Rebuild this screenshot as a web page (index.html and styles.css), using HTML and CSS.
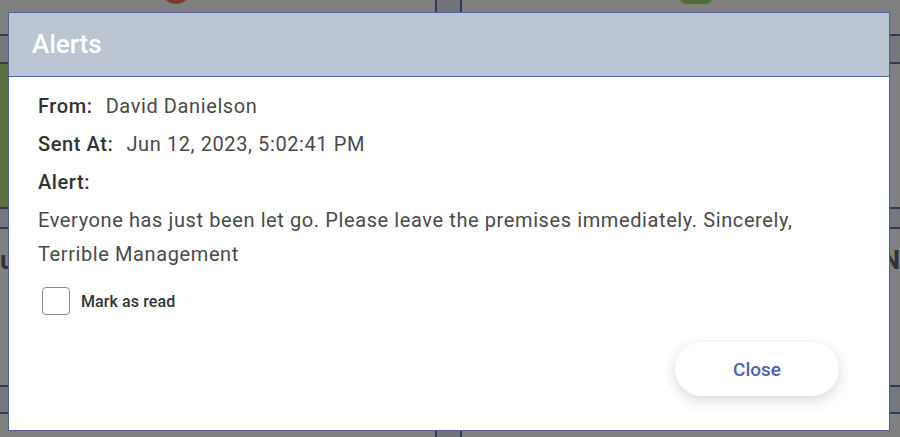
FILE: index.html
```html
<!DOCTYPE html>
<html lang="en">
<head>
<meta charset="utf-8">
<title>Alerts</title>
<link rel="stylesheet" href="styles.css">
</head>
<body>
<div class="app">
  <div class="col col-left">
    <div class="dot red"></div>
    <div class="band band-top"></div>
    <div class="green"></div>
    <div class="band band-mid"></div>
    <div class="bg-letter">u</div>
    <div class="spacer"></div>
    <div class="band band-bottom"></div>
  </div>
  <div class="divider"></div>
  <div class="col col-right">
    <div class="dot green-dot"></div>
    <div class="band band-top"></div>
    <div class="blank"></div>
    <div class="band band-mid"></div>
    <div class="bg-letter">N</div>
    <div class="spacer"></div>
    <div class="band band-bottom"></div>
  </div>
</div>

<div class="modal">
  <div class="modal-header">Alerts</div>
  <div class="modal-body">
    <div class="row"><span class="label">From:</span><span class="value">David Danielson</span></div>
    <div class="row"><span class="label">Sent At:</span><span class="value">Jun 12, 2023, 5:02:41 PM</span></div>
    <div class="row"><span class="label">Alert:</span></div>
    <p class="message">Everyone has just been let go. Please leave the premises immediately. Sincerely, Terrible Management</p>
    <label class="check"><span class="box"></span><span class="check-text">Mark as read</span></label>
    <div class="actions"><button class="close-btn">Close</button></div>
  </div>
</div>
</body>
</html>
```
FILE: styles.css
```css
* { box-sizing: border-box; }
html, body { margin: 0; padding: 0; }
body {
  width: 900px;
  height: 437px;
  overflow: hidden;
  background: #808080;
  font-family: Roboto, "Liberation Sans", sans-serif;
  position: relative;
}
.app {
  display: flex;
  height: 437px;
}
.col {
  display: flex;
  flex-direction: column;
  position: relative;
}
.col-left { width: 438px; }
.col-right { flex: 1; }
.divider {
  width: 27px;
  background: #727478;
  border-left: 2px solid #2f3a55;
  border-right: 2px solid #2f3a55;
}
.dot { position: absolute; top: -10px; height: 14px; }
.red { left: 165px; width: 22px; border-radius: 50%; background: #7a3a32; }
.green-dot { left: 218px; width: 32px; border-radius: 6px; background: #4f6c3a; }
.band {
  height: 30px;
  background: #75777b;
  border-top: 2px solid #2f3a55;
  border-bottom: 2px solid #2f3a55;
  flex: none;
}
.band-top { margin-top: 34px; }
.green { height: 143px; background: #5e6e3f; flex: none; }
.blank { height: 143px; flex: none; }
.band-mid { height: 22px; }
.bg-letter {
  font-size: 26px;
  font-weight: 700;
  color: #333;
  line-height: 30px;
  margin-top: 16px;
}
.col-left .bg-letter { margin-left: 0; }
.col-right .bg-letter { margin-left: 420px; }
.spacer { flex: 1; }
.band-bottom { margin-bottom: 23px; height: 29px; }

.modal {
  position: absolute;
  left: 8px;
  top: 12px;
  width: 882px;
  height: 419px;
  background: #fff;
  border: 1px solid #4e6496;
  display: flex;
  flex-direction: column;
}
.modal-header {
  height: 64px;
  background: #bcc6d2;
  border-bottom: 1px solid #4e6496;
  color: #fff;
  font-size: 26px;
  font-weight: 500;
  padding-left: 23px;
  line-height: 63px;
  flex: none;
}
.modal-body {
  flex: 1;
  padding: 12px 50px 34px 29px;
  display: flex;
  flex-direction: column;
  color: #444;
}
.row {
  display: flex;
  gap: 13px;
  font-size: 20px;
  line-height: 34px;
  letter-spacing: 0.6px;
  margin-bottom: 4px;
}
.label { color: #333; font-weight: 500; }
.value { color: #4a4a4a; }
.message {
  margin: 0;
  font-size: 20px;
  line-height: 34px;
  letter-spacing: 0.6px;
  color: #4a4a4a;
}
.check {
  display: flex;
  align-items: center;
  gap: 11px;
  margin-top: 16px;
  margin-left: 4px;
}
.box {
  width: 28px;
  height: 28px;
  border: 1px solid #8a8a8a;
  border-radius: 4px;
  background: #fff;
}
.check-text {
  font-size: 16px;
  font-weight: 500;
  letter-spacing: 0.1px;
  color: #333;
}
.actions {
  margin-top: auto;
  display: flex;
  justify-content: flex-end;
}
.close-btn {
  width: 164px;
  height: 54px;
  border: none;
  border-radius: 27px;
  background: #fff;
  box-shadow: 0 4px 14px rgba(0, 0, 0, 0.16);
  color: #4a63b5;
  font-family: Roboto, "Liberation Sans", sans-serif;
  font-size: 19px;
  font-weight: 500;
}
```
